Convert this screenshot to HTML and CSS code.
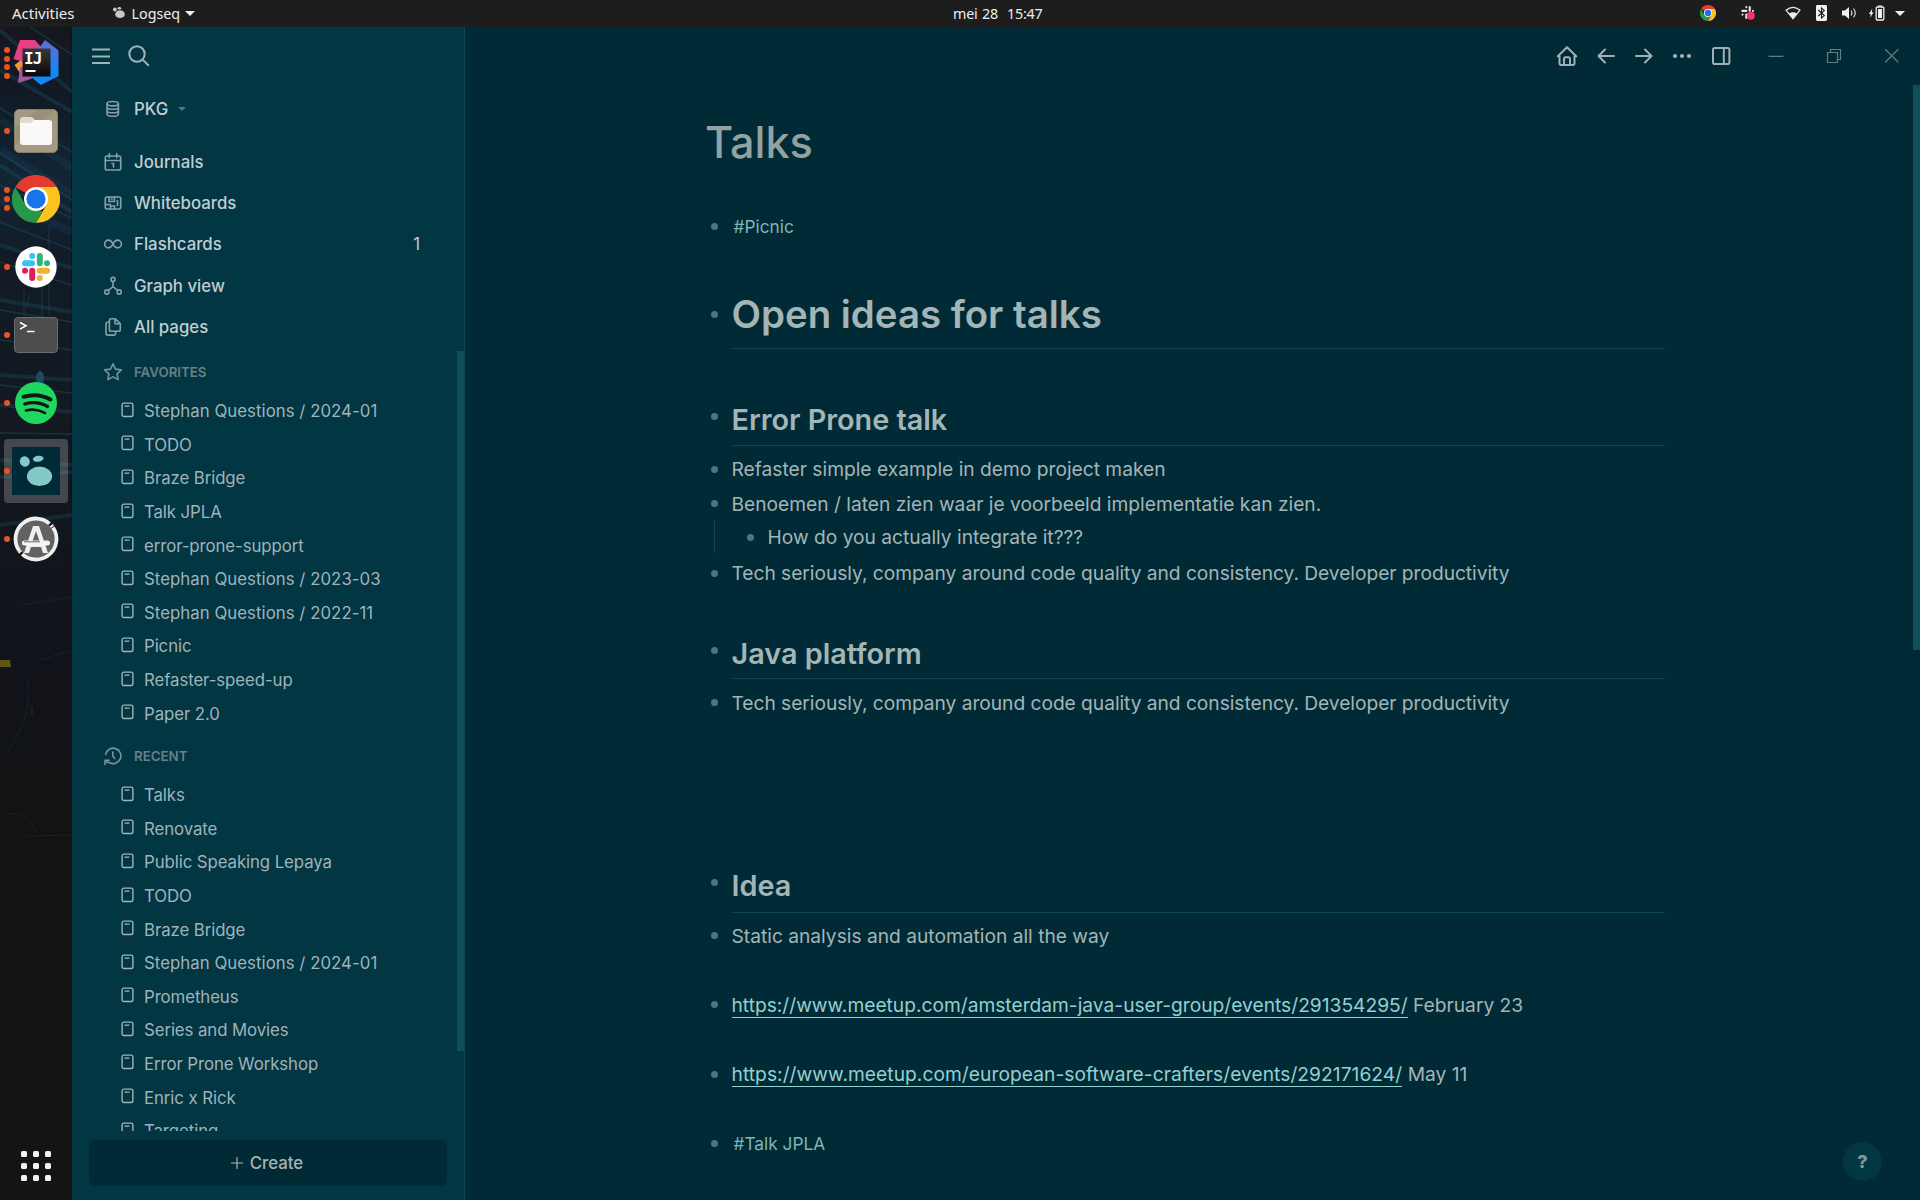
FILE: index.html
```html
<!DOCTYPE html>
<html lang="en">
<head>
<meta charset="utf-8">
<title>Talks - Logseq</title>
<link rel="stylesheet" href="styles.css">
</head>
<body>
<svg class="defs" width="0" height="0">
  <defs>
    <symbol id="page" viewBox="0 0 13 16"><rect x="1.1" y="1.1" width="10.8" height="13.4" rx="1.8" fill="none" stroke="currentColor" stroke-width="1.4"/><path d="M4 4.1h4" stroke="currentColor" stroke-width="1.4"/></symbol>
    <symbol id="chrome" viewBox="0 0 48 48">
      <path d="M24 24 3.2 12A24 24 0 0 1 44.8 12z" fill="#e33b2e"/>
      <path d="M24 12h20.8A24 24 0 0 1 24 48l10.4-18z" fill="#fcc31e"/>
      <path d="M3.2 12 13.6 30 24 36h6.9L24 48A24 24 0 0 1 3.2 12z" fill="#279847"/>
      <circle cx="24" cy="24" r="12" fill="#fff"/><circle cx="24" cy="24" r="9.6" fill="#1a73e8"/>
    </symbol>
  </defs>
</svg>

<div class="desktop">
  <header class="topbar">
    <div class="topbar-left">
      <span class="activities">Activities</span>
      <svg width="14" height="14" viewBox="0 0 14 14" fill="#c8c8c8"><ellipse cx="2.9" cy="3.4" rx="1.9" ry="2"/><ellipse cx="7.4" cy="2.2" rx="1.8" ry="1.2"/><ellipse cx="8" cy="8.2" rx="4.8" ry="3.9"/></svg>
      <span class="app-name">Logseq</span>
      <span class="caret"></span>
    </div>
    <div class="clock">mei 28&nbsp; 15:47</div>
    <div class="topbar-right">
      <svg class="t-chrome" width="16" height="16"><use href="#chrome"/></svg>
      <svg class="t-slack" width="16" height="16" viewBox="0 0 16 16" stroke="#e8e8e8" stroke-width="2.1" stroke-linecap="round"><path d="M6.300 2v.1M2.300 5.900h4M9.700 2v3.800M13 5.900v.1M2.500 9.500v.1M6.300 9.500v3.500M9.700 9.500H13"/><circle cx="10.8" cy="10.8" r="4" fill="#f5346f" stroke="none"/></svg>
      <svg class="t-wifi" width="16" height="14" viewBox="0 0 16 14"><path d="M1 4.2Q8-1.5 15 4.2L8 12.8z" fill="none" stroke="#eee" stroke-width="1.2"/><path d="M4 7.4Q8 5 12 7.4L8 12.6z" fill="#eee"/></svg>
      <svg class="t-bt" width="11" height="16" viewBox="0 0 11 16"><rect width="11" height="16" rx="1.4" fill="#f2f2f2"/><path d="M2.3 5l6 5.6L5.5 13V3l2.8 2.4-6 5.6" fill="none" stroke="#1d1d1d" stroke-width="1.1"/></svg>
      <svg class="t-vol" width="15" height="14" viewBox="0 0 15 14"><path d="M0 4.5h3L7 1v12L3 9.500H0z" fill="#f0f0f0"/><path d="M9 4.500q1.800 2.500 0 5M11.500 2.500q3.500 4.500 0 9" fill="none" stroke="#ddd" stroke-width="1.200"/></svg>
      <svg class="t-bat" width="16" height="16" viewBox="0 0 16 16"><path d="M3.300 3.500 0 9h1.800L1 12.500 4.600 7.500H2.800z" fill="#f0f0f0"/><rect x="7.200" y="2" width="7.600" height="13" rx="1" fill="none" stroke="#f0f0f0" stroke-width="1.300"/><path d="M9 .5h4v1H9zM9 4h4v9H9z" fill="#f0f0f0"/></svg>
      <span class="caret"></span>
    </div>
  </header>

  <div class="workspace">
    <nav class="dock">
      <svg class="wallpaper" width="72" height="1173" viewBox="0 27 72 1173" fill="none">
        <g stroke="#1a5a66" stroke-width="1.500" opacity=".42">
          <path d="M30 27 72 55M0 108 72 152M0 153 72 200M0 185 72 218M0 222 72 250M0 262 72 285M0 310 72 322M0 340 72 350M0 385 72 393M0 433 72 434"/>
        </g>
        <g stroke="#17506a" stroke-width="8" opacity=".2"><path d="M0 120 72 168M0 150 72 195M0 200 72 232"/></g>
        <g stroke="#1d6670" stroke-width="4" opacity=".26"><path d="M0 30 72 92M0 70 72 112M0 165 72 212M0 245 72 268M0 300 72 312M0 375 72 380M0 405 72 412M0 460 72 465M0 477 72 472M0 525 72 515"/></g>
        <g stroke="#206080" opacity=".4"><path d="M49 225v90M42 280v40M24 290v40M30 295l-4 14"/></g>
        <g stroke="#143a5c" opacity=".4"><path d="M28 680q3 30-8 50T8 752M20 605 72 597M40 660 72 650M6 814q26-3 30 20M26 836l46-1"/><path d="M32 707v8" stroke="#743a86"/></g>
        <path d="M0 660h10l1 7H0z" fill="#5f5710"/>
        <ellipse cx="40" cy="378" rx="4" ry="7" fill="#1d4c62"/>
      </svg>
      <div class="launcher"><span class="pips"><i></i><i></i><i></i><i></i></span>
        <svg width="48" height="48" viewBox="0 0 48 48">
          <defs><linearGradient id="ij1" x1="0" y1="0" x2="1" y2="1"><stop offset="0" stop-color="#ff3a6c"/><stop offset="1" stop-color="#b94ea8"/></linearGradient><linearGradient id="ij2" x1="0" y1="0" x2="0" y2="1"><stop offset="0" stop-color="#6a6ad2"/><stop offset=".7" stop-color="#1288f8"/></linearGradient><linearGradient id="ij3" x1="0" y1="0" x2="0" y2="1"><stop stop-color="#383838"/><stop offset="1" stop-color="#080808"/></linearGradient></defs>
          <path d="M2.500 26 9 21l10 10-9 6z" fill="#f79432"/>
          <path d="M8 28 6 44l13-4 16-14z" fill="#a8559f"/>
          <path d="M8 1h15l6 7-14 16L1.500 20z" fill="url(#ij1)"/>
          <path d="m33 1 13.500 10.500V37L29 46l-10-8 8-29z" fill="url(#ij2)"/>
          <rect x="10.500" y="9.500" width="28" height="28" fill="url(#ij3)"/>
          <rect x="13.500" y="31" width="10" height="2" fill="#fff"/>
          <text x="12" y="25" class="ij">IJ</text>
        </svg></div>
      <div class="launcher"><span class="pips"><i></i></span>
        <svg width="48" height="48" viewBox="0 0 48 48"><rect x="2.500" y="2.500" width="43" height="43" rx="4.500" fill="#a49a83" stroke="#867e6b"/><path d="M3.500 20 26 3H44L3.500 38z" fill="#948a74" opacity=".6"/><path d="M8 13q0-3 3-3h9l4 4h12v12H8z" fill="#dedbd0"/><path d="M8 16h11l3-3h15q3 0 3 3v19q0 3-3 3H11q-3 0-3-3z" fill="#faf9f7"/></svg></div>
      <div class="launcher"><span class="pips"><i></i><i></i><i></i></span>
        <svg width="48" height="48"><use href="#chrome"/></svg></div>
      <div class="launcher"><span class="pips"><i></i></span>
        <svg width="48" height="48" viewBox="0 0 48 48"><circle cx="24" cy="24" r="20.700" fill="#fff"/><g stroke-width="6" stroke-linecap="round" fill="none"><path d="M20.200 13v.01M13 20.200h7" stroke="#36c5f0"/><path d="M27.800 13v7.200M35 20.200v.01" stroke="#2eb67d"/><path d="M35 27.800h-7.200M27.800 35v.01" stroke="#ecb22e"/><path d="M13 27.800v.01M20.200 27.800V35" stroke="#e01e5a"/></g></svg></div>
      <div class="launcher"><span class="pips"><i></i></span>
        <svg width="48" height="48" viewBox="0 0 48 48"><rect x="2.500" y="6.500" width="43" height="35" rx="3.500" fill="#4d4d4d" stroke="#6c6c6c"/><path d="m8 11.500 6 3.300-6 3.300M15 20.500h7.500" fill="none" stroke="#fff" stroke-width="1.600"/></svg></div>
      <div class="launcher"><span class="pips"><i></i></span>
        <svg width="48" height="48" viewBox="0 0 48 48"><circle cx="24" cy="24" r="21" fill="#1ed760"/><g fill="none" stroke="#121a14" stroke-linecap="round"><path d="M11.500 17.800Q26 13.500 38.500 20.500" stroke-width="4"/><path d="M12.800 25Q25 21.500 35.500 27.500" stroke-width="3.300"/><path d="M14 31.500Q24 29 33 34" stroke-width="2.600"/></g></svg></div>
      <div class="launcher active"><span class="pips"><i></i></span>
        <svg width="48" height="48" viewBox="0 0 48 48"><rect width="48" height="48" fill="#002b36"/><g fill="#85c8c8"><ellipse cx="12.800" cy="14.500" rx="4.900" ry="5.300" transform="rotate(-30 12.800 14.500)"/><ellipse cx="26.200" cy="11.800" rx="5.400" ry="3" transform="rotate(-8 26.200 11.800)"/><ellipse cx="27.500" cy="29.300" rx="12.600" ry="9.700"/></g></svg></div>
      <div class="launcher"><span class="pips"><i></i></span>
        <svg width="48" height="48" viewBox="0 0 48 48"><circle cx="24" cy="24" r="19" fill="#626262"/><circle cx="24" cy="24" r="20.500" fill="none" stroke="#f0f0f0" stroke-width="3.800" stroke-dasharray="59 2.400 2 1" transform="rotate(-215 24 24)"/><path d="M12 38 21 11h6l9 27h-5l-2-6H19l-2 6zM20.500 26h7L24 16z" fill="#f0f0f0" fill-rule="evenodd"/><rect x="10" y="25.500" width="28" height="5" rx="2.500" fill="#f4f4f4"/><path d="M12 26.800h16" stroke="#8a4a90"/></svg></div>
      <div class="apps-grid"><i></i><i></i><i></i><i></i><i></i><i></i><i></i><i></i><i></i></div>
    </nav>

    <aside class="sidebar">
      <div class="sidebar-tools">
        <svg width="24" height="24" viewBox="0 0 24 24"><path d="M3 5.500h18M3 12.500h18M3 19h18"/></svg>
        <svg width="24" height="24" viewBox="0 0 24 24"><circle cx="10" cy="10" r="7.700"/><path d="m15.600 15.600 6.200 6.200"/></svg>
      </div>
      <div class="nav-row graph-row">
        <svg viewBox="0 0 20 20"><ellipse cx="9.700" cy="4.700" rx="5.700" ry="2.200"/><path d="M4 4.700v10.200c0 1.200 2.500 2.300 5.700 2.300s5.700-1.100 5.700-2.300V4.700M4 8.200c0 1.200 2.500 2.100 5.700 2.100s5.700-.9 5.700-2.100M4 11.700c0 1.200 2.500 2.100 5.700 2.100s5.700-.9 5.700-2.100"/></svg>
        <span>PKG</span><span class="caret small"></span>
      </div>
      <div class="nav">
        <div class="nav-row"><svg viewBox="0 0 20 20"><rect x="2.300" y="4" width="15.400" height="14" rx="1.800"/><path d="M6.300 1.500v4M13.700 1.500v4M2.300 8.500h15.400M9 11.500h1.500V15"/></svg><span>Journals</span></div>
        <div class="nav-row"><svg viewBox="0 0 20 20"><rect x="2.300" y="4" width="15.400" height="12" rx="1.500"/><path d="M6 4v4.500h5.500V4M2.300 11.500h5.200V16M7.500 13h4v3M14.500 7.500v5M8.300 6h1"/></svg><span>Whiteboards</span></div>
        <div class="nav-row"><svg viewBox="0 0 20 20"><path d="M10 10c-1-2-2.200-3.900-4.500-3.900a3.900 3.900 0 0 0 0 7.800C7.800 13.900 9 12 10 10s2.200-3.900 4.500-3.900a3.900 3.900 0 0 1 0 7.800C12.200 13.900 11 12 10 10z"/></svg><span>Flashcards</span><span class="count">1</span></div>
        <div class="nav-row"><svg viewBox="0 0 20 20"><circle cx="10" cy="3.400" r="2"/><circle cx="3.800" cy="16" r="2.100"/><circle cx="16.200" cy="16" r="2.100"/><path d="M10 5.500v5.200M5.300 14.500l4.700-3.800 4.700 3.800"/></svg><span>Graph view</span></div>
        <div class="nav-row"><svg viewBox="0 0 20 20"><path d="M12 1.700H8.200Q6.400 1.700 6.400 3.500v9q0 1.800 1.800 1.800h7.300q1.800 0 1.800-1.800V6.700zM12 1.700v5h5.300M6.400 5.300H4.700Q3 5.300 3 7v9.300q0 1.800 1.800 1.800h6q1.800 0 1.800-1.800v-2"/></svg><span>All pages</span></div>
      </div>
      <div class="side-scroll">
        <div class="head"><svg viewBox="0 0 20 20"><path d="m10 1.900 2.500 5.200 5.800.8-4.200 4 1 5.700-5.100-2.700-5.100 2.700 1-5.700-4.200-4 5.800-.8z"/></svg><span>FAVORITES</span></div>
        <ul class="pages">
          <li class="dated"><svg><use href="#page"/></svg>Stephan Questions / 2024-01</li>
          <li><svg><use href="#page"/></svg>TODO</li>
          <li><svg><use href="#page"/></svg>Braze Bridge</li>
          <li><svg><use href="#page"/></svg>Talk JPLA</li>
          <li><svg><use href="#page"/></svg>error-prone-support</li>
          <li class="dated"><svg><use href="#page"/></svg>Stephan Questions / 2023-03</li>
          <li class="dated"><svg><use href="#page"/></svg>Stephan Questions / 2022-11</li>
          <li><svg><use href="#page"/></svg>Picnic</li>
          <li><svg><use href="#page"/></svg>Refaster-speed-up</li>
          <li><svg><use href="#page"/></svg>Paper 2.0</li>
        </ul>
        <div class="head recent"><svg viewBox="0 0 20 20"><path d="M2.600 8.500a7.700 7.700 0 1 1 3 7.600M2 18.500v-4.200h4.200M2.300 14.600l2.500 2M9.800 6v4.300l2 2.200"/></svg><span>RECENT</span></div>
        <ul class="pages">
          <li><svg><use href="#page"/></svg>Talks</li>
          <li><svg><use href="#page"/></svg>Renovate</li>
          <li><svg><use href="#page"/></svg>Public Speaking Lepaya</li>
          <li><svg><use href="#page"/></svg>TODO</li>
          <li><svg><use href="#page"/></svg>Braze Bridge</li>
          <li class="dated"><svg><use href="#page"/></svg>Stephan Questions / 2024-01</li>
          <li><svg><use href="#page"/></svg>Prometheus</li>
          <li><svg><use href="#page"/></svg>Series and Movies</li>
          <li><svg><use href="#page"/></svg>Error Prone Workshop</li>
          <li><svg><use href="#page"/></svg>Enric x Rick</li>
          <li><svg><use href="#page"/></svg>Targeting</li>
        </ul>
        <span class="thumb"></span>
      </div>
      <div class="create"><svg width="12" height="12" viewBox="0 0 12 12"><path d="M6 .5v11M.5 6h11"/></svg><span>Create</span></div>
    </aside>

    <main class="main">
      <div class="toolbar">
        <svg class="home" viewBox="0 0 24 24"><path d="M4.500 12.300H2.800L12 3.300l9.200 9H19.500M4.500 12.300v7q0 1.700 1.700 1.700h11.600q1.700 0 1.700-1.700v-7M9 21v-6q0-1.700 1.700-1.700h2.600Q15 13.300 15 15v6"/></svg>
        <svg class="back" viewBox="0 0 24 24"><path d="M20 12H4.500M11 5.500 4.500 12l6.500 6.500"/></svg>
        <svg class="forward" viewBox="0 0 24 24"><path d="M4 12h15.500M13 5.500l6.500 6.500-6.500 6.500"/></svg>
        <svg class="more" viewBox="0 0 24 24"><g fill="currentColor" stroke="none"><circle cx="5" cy="12" r="2.100"/><circle cx="12" cy="12" r="2.100"/><circle cx="19" cy="12" r="2.100"/></g></svg>
        <svg class="panel" viewBox="0 0 24 24"><rect x="4" y="4" width="16.400" height="16" rx="1.800"/><path d="M14.800 4v16"/></svg>
        <svg class="win min" viewBox="0 0 24 24"><path d="M5 12.300h14"/></svg>
        <svg class="win restore" viewBox="0 0 24 24"><path d="M5.500 8.500h10v10h-10zM8.500 8.500v-3h10v10h-3"/></svg>
        <svg class="win close" viewBox="0 0 24 24"><path d="m5.500 5.500 12.500 12.500M18 5.500l-12.500 12.500"/></svg>
      </div>
      <div class="page">
        <h1 class="title">Talks</h1>
        <div class="block"><i></i><span class="tag">#Picnic</span></div>
        <div class="block big"><i></i><h1>Open ideas for talks</h1></div>
        <div class="block mid"><i></i><h2>Error Prone talk</h2></div>
        <div class="block after-heading"><i></i><span>Refaster simple example in demo project maken</span></div>
        <div class="block"><i></i><span>Benoemen / laten zien waar je voorbeeld implementatie kan zien.</span></div>
        <div class="children"><div class="block"><i></i><span>How do you actually integrate it???</span></div></div>
        <div class="block"><i></i><span class="long">Tech seriously, company around code quality and consistency. Developer productivity</span></div>
        <div class="block mid java"><i></i><h2>Java platform</h2></div>
        <div class="block after-heading"><i></i><span class="long">Tech seriously, company around code quality and consistency. Developer productivity</span></div>
        <div class="block mid idea"><i></i><h2>Idea</h2></div>
        <div class="block after-heading"><i></i><span>Static analysis and automation all the way</span></div>
        <div class="block spaced"><i></i><span><a>https://www.meetup.com/amsterdam-java-user-group/events/291354295/</a> February 23</span></div>
        <div class="block spaced"><i></i><span><a class="wide">https://www.meetup.com/european-software-crafters/events/292171624/</a> May 11</span></div>
        <div class="block spaced"><i></i><span class="tag">#Talk JPLA</span></div>
      </div>
      <span class="main-thumb"></span>
      <span class="help">?</span>
    </main>
  </div>
</div>
</body>
</html>
```
FILE: styles.css
```css
* { box-sizing: border-box; }
body { margin: 0; background: #002b36; font-family: Inter, sans-serif; }
svg { display: block; flex: none; }
i { font-style: normal; }
h1, h2, ul { margin: 0; padding: 0; }
.defs { position: absolute; }
.desktop { width: 1920px; height: 1200px; display: flex; flex-direction: column; overflow: hidden; }

/* GNOME top bar */
.topbar { height: 27px; flex: none; display: grid; grid-template-columns: 953px auto 1fr; align-items: center; background: #1d1d1d; color: #eee; font: 14.3px "Noto Sans", sans-serif; padding-bottom: 1px; }
.topbar-left, .topbar-right { display: flex; align-items: center; }
.topbar-left { padding-left: 12px; }
.activities { font-size: 15px; margin-right: 37px; }
.app-name { margin: 0 6px 0 6px; }
.clock { letter-spacing: -.2px; word-spacing: 1px; }
.caret { width: 0; height: 0; border: 5px solid transparent; border-top-color: #eee; border-bottom: 0; }
.topbar-left .caret { margin-left: -1px; }
.topbar-right { justify-content: flex-end; padding-right: 15px; }
.t-slack { margin-left: 24px; }
.t-wifi { margin-left: 29px; }
.t-bt { margin-left: 15px; }
.t-vol { margin-left: 15px; }
.t-bat { margin-left: 12px; }
.topbar-right .caret { margin-left: 10px; }

.workspace { flex: 1; display: flex; min-height: 0; }

/* Dock */
.dock { width: 72px; flex: none; position: relative; display: flex; flex-direction: column; padding-top: 2px; background: linear-gradient(#15171e 0, #111a26 6%, #122536 13%, #121b26 20%, #131820 35%, #11151c 45%, #12131a 55%, #131313 68%, #141414); border-right: 1px solid #0e1317; }
.wallpaper { position: absolute; left: 0; top: 0; }
.launcher { height: 68px; position: relative; display: flex; align-items: center; padding-left: 12px; }
.launcher.active::before { content: ""; position: absolute; left: 4px; top: 2px; width: 64px; height: 64px; border-radius: 4px; background: rgba(255,255,255,.21); }
.launcher svg { position: relative; }
.pips { position: absolute; z-index: 1; left: 4px; top: 0; height: 68px; display: flex; flex-direction: column; justify-content: center; gap: 2.700px; }
.pips i { width: 6px; height: 6px; border-radius: 50%; background: #e95420; }
.ij { font: bold 16px "DejaVu Sans Mono", monospace; fill: #fff; letter-spacing: -.8px; }
.apps-grid { margin: auto 0 19px 21px; width: 30px; display: grid; grid-template-columns: repeat(3, 6px); gap: 6px; position: relative; }
.apps-grid i { height: 6px; border-radius: 1.500px; background: #f2f2f2; }

/* Left sidebar */
.sidebar { width: 393px; flex: none; display: flex; flex-direction: column; background: #023643; border-right: 1px solid #0b4654; color: #c0cdd2; font-size: 16.8px; }
.sidebar svg, .toolbar svg { fill: none; stroke: currentColor; stroke-linecap: round; stroke-linejoin: round; }
.sidebar-tools { height: 58px; display: flex; align-items: center; gap: 14px; padding-left: 17px; color: #9fb3b9; stroke-width: 2; }
.sidebar-tools svg { stroke-linecap: butt; }
.nav-row { height: 41.300px; display: flex; align-items: center; padding: 0 44px 0 31px; font-weight: 500; }
.nav-row svg, .head svg { width: 20px; height: 20px; margin-right: 11px; color: #87a0a8; stroke-width: 1.600; }
.graph-row { height: 48px; margin-bottom: 8px; }
.caret.small { border-width: 4px 4px 0; border-top-color: #58747d; margin-left: 10px; }
.count { margin-left: auto; font-weight: 400; }
.side-scroll { margin-top: 3.500px; height: 780px; position: relative; overflow: hidden; }
.head { height: 42.500px; margin-bottom: 1px; display: flex; align-items: center; padding-left: 31px; font-size: 13.300px; font-weight: 600; color: #668188; }
.head svg { color: #78939b; }
.recent { margin-top: 4.500px; }
.pages { list-style: none; color: #9fb3b9; }
.pages li { height: 33.600px; display: flex; align-items: center; padding-left: 48.500px; letter-spacing: -.08px; }
.pages .dated { letter-spacing: .04px; }
.pages svg { width: 13px; height: 16px; margin: -3px 10.500px 0 0; }
.thumb { position: absolute; right: 0; top: 0; width: 7px; height: 700px; background: #104e5c; }
.create { margin: 9px 17px 0; padding-right: 2px; height: 46px; border-radius: 7px; background: #002b36; display: flex; align-items: center; justify-content: center; gap: 7px; color: #a9b4b4; font-weight: 500; }
.create svg { stroke-width: 1.200; }

/* Main pane */
.main { flex: 1; position: relative; background: #002b36; color: #a4b5b6; font-size: 19.200px; }
.toolbar { height: 58px; display: flex; align-items: center; justify-content: flex-end; padding-right: 16.500px; color: #9fb1b6; stroke-width: 2; }
.toolbar svg { width: 24px; height: 24px; }
.toolbar .back, .toolbar .panel { margin-left: 15px; }
.toolbar .forward, .toolbar .more { margin-left: 14px; }
.toolbar .win { stroke-width: 1.200; color: #5f7f86; stroke-linejoin: miter; }
.toolbar .min { margin-left: 31px; }
.toolbar .restore { margin-left: 34px; }
.toolbar .close { margin-left: 33.500px; }
.page { padding-left: 242px; width: 1200px; }
.title { height: 115px; margin: 0 0 9.500px -2px; line-height: 115px; font-size: 43.200px; font-weight: 500; color: #93a1a1; }
.block { height: 34.400px; display: flex; align-items: center; white-space: nowrap; }
.block > i { width: 7px; height: 7px; margin: 0 13.500px 0 4px; border-radius: 50%; background: #4a787f; flex: none; }
.block h1, .block h2 { flex: 1; font-weight: 600; border-bottom: 1px solid #0d4653; }
.big { height: 58px; margin-top: 47px; align-items: flex-start; }
.big h1 { height: 58px; font-size: 38.400px; line-height: 46px; }
.big > i { margin-top: 20px; }
.mid { height: 44.200px; margin-top: 53px; align-items: flex-start; }
.mid h2 { height: 44.200px; font-size: 28.800px; line-height: 35px; }
.mid > i { margin-top: 11px; }
.java { margin-top: 45.100px; height: 43.700px; }
.java h2 { height: 43.700px; line-height: 36px; }
.idea { margin-top: 148.600px; }
.after-heading { margin-top: 6px; }
.spaced { margin-top: 34.900px; }
.long { letter-spacing: -.035px; }
.children { margin: -1px 0 3.300px 7px; padding-left: 28px; border-left: 1px solid #0d4653; height: 33px; }
.tag { font-size: 17.280px; color: #7fb5b5; margin-left: 2px; }
a { color: #93d0d0; border-bottom: 1px solid #93d0d0; }
.wide { letter-spacing: .05px; }
.main-thumb { position: absolute; right: 0; top: 58px; width: 7px; height: 565px; background: #104e5c; }
.help { position: absolute; right: 38px; bottom: 19px; width: 39px; height: 39px; border-radius: 50%; background: #023643; color: #7d999d; font-size: 18px; font-weight: 800; line-height: 40px; text-align: center; }
```
